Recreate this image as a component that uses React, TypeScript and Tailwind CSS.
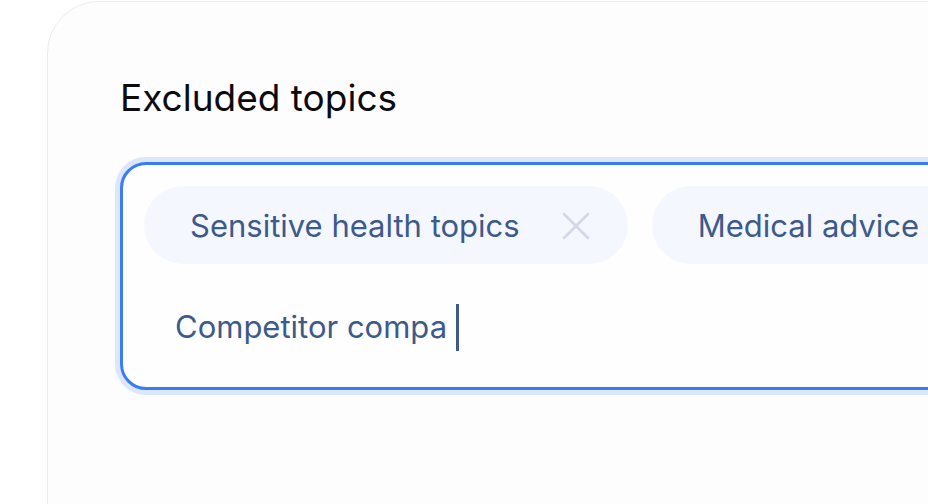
export default function App() {
  return (
    <div className="w-[928px] h-[504px] overflow-hidden bg-white pl-[47px] pt-[1px]" style={{ fontFamily: "Inter, 'Noto Sans', sans-serif" }}>
      <div className="w-[1300px] h-[600px] rounded-tl-[52px] border border-[#ececef] bg-[#fdfdfe] pl-[72px] pt-[72px]">
        <h2 className="text-[37px] leading-[48px] text-[#0b0b0f] font-normal">Excluded topics</h2>
        <div className="mt-[40px] w-[1200px] rounded-[26px] border-[3px] border-[#3b7cf4] bg-[#fefeff] ring-[5px] ring-[#dce6fd] p-[21px] pr-0">
          <div className="flex flex-wrap gap-x-[24px] gap-y-[24px]">
            <div className="flex items-center h-[78px] rounded-full bg-[#f5f7fe] pl-[46px] pr-[38px] pt-[2px]">
              <span className="text-[31px] text-[#3c5a8b] whitespace-nowrap">Sensitive health topics</span>
              <svg className="ml-[42px]" width="28" height="28" viewBox="0 0 28 28" fill="none" stroke="#d3d8e7" strokeWidth="2.6" strokeLinecap="round">
                <path d="M2 2L26 26M26 2L2 26" />
              </svg>
            </div>
            <div className="flex items-center h-[78px] rounded-full bg-[#f5f7fe] pl-[46px] pr-[38px] pt-[2px]">
              <span className="text-[31px] text-[#3c5a8b] whitespace-nowrap">Medical advice</span>
              <svg className="ml-[42px]" width="28" height="28" viewBox="0 0 28 28" fill="none" stroke="#d3d8e7" strokeWidth="2.6" strokeLinecap="round">
                <path d="M2 2L26 26M26 2L2 26" />
              </svg>
            </div>
            <div className="w-full flex items-center h-[78px] pl-[31px]">
              <span className="text-[31px] text-[#3c5a8b]">Competitor compa</span>
              <span className="ml-[9px] w-[3px] h-[47px] bg-[#3c5a8b]" />
            </div>
          </div>
        </div>
      </div>
    </div>
  );
}
